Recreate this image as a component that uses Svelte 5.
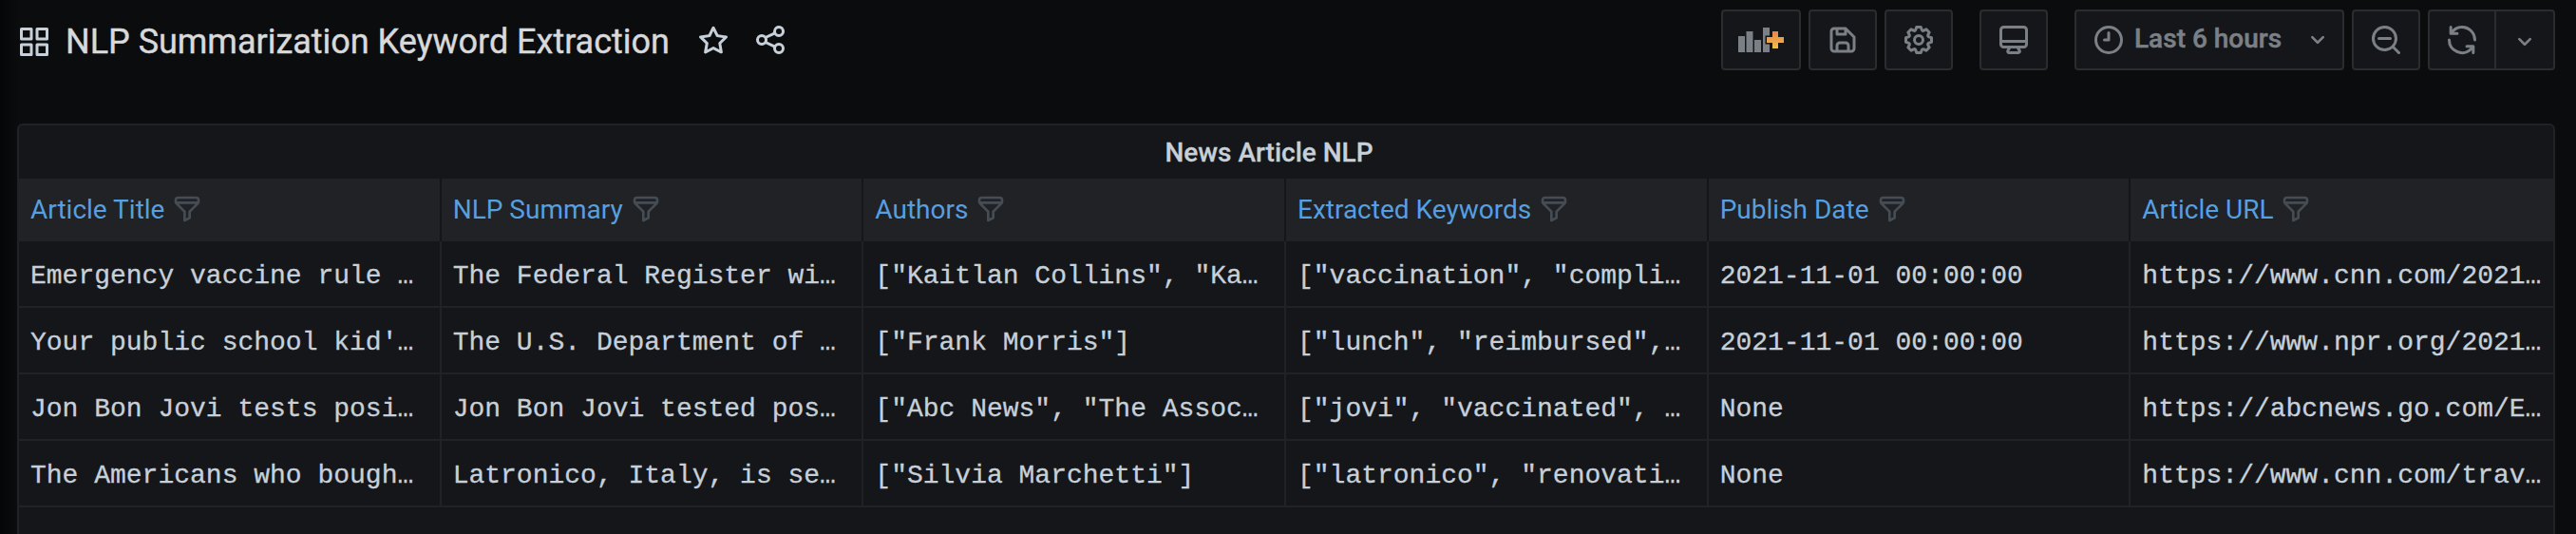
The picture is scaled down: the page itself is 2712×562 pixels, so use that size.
<script>
  const columns = ['Article Title', 'NLP Summary', 'Authors', 'Extracted Keywords', 'Publish Date', 'Article URL'];
  const rows = [
    ['Emergency vaccine rule …', 'The Federal Register wi…', '["Kaitlan Collins", "Ka…', '["vaccination", "compli…', '2021-11-01 00:00:00', 'https://www.cnn.com/2021…'],
    ["Your public school kid'…", 'The U.S. Department of …', '["Frank Morris"]', '["lunch", "reimbursed",…', '2021-11-01 00:00:00', 'https://www.npr.org/2021…'],
    ['Jon Bon Jovi tests posi…', 'Jon Bon Jovi tested pos…', '["Abc News", "The Assoc…', '["jovi", "vaccinated", …', 'None', 'https://abcnews.go.com/E…'],
    ['The Americans who bough…', 'Latronico, Italy, is se…', '["Silvia Marchetti"]', '["latronico", "renovati…', 'None', 'https://www.cnn.com/trav…']
  ];
</script>

<div class="page">
  <header>
    <svg class="ic apps" viewBox="0 0 24 24"><path d="M10,13H3a1,1,0,0,0-1,1v7a1,1,0,0,0,1,1h7a1,1,0,0,0,1-1V14A1,1,0,0,0,10,13ZM9,20H4V15H9ZM21,2H14a1,1,0,0,0-1,1v7a1,1,0,0,0,1,1h7a1,1,0,0,0,1-1V3A1,1,0,0,0,21,2ZM20,9H15V4h5Zm1,4H14a1,1,0,0,0-1,1v7a1,1,0,0,0,1,1h7a1,1,0,0,0,1-1V14A1,1,0,0,0,21,13Zm-1,7H15V15h5ZM10,2H3A1,1,0,0,0,2,3v7a1,1,0,0,0,1,1h7a1,1,0,0,0,1-1V3A1,1,0,0,0,10,2ZM9,9H4V4H9Z"/></svg>
    <h1>NLP Summarization Keyword Extraction</h1>
    <svg class="ic star" viewBox="0 0 24 24"><path d="M22,9.67A1,1,0,0,0,21.14,9l-5.69-.83L12.9,3a1,1,0,0,0-1.8,0L8.55,8.16,2.86,9a1,1,0,0,0-.81.68,1,1,0,0,0,.25,1l4.13,4-1,5.68A1,1,0,0,0,6.9,21.44L12,18.77l5.1,2.67a.93.93,0,0,0,.46.12,1,1,0,0,0,.59-.19,1,1,0,0,0,.4-1l-1-5.68,4.13-4A1,1,0,0,0,22,9.67Zm-6.15,4a1,1,0,0,0-.29.88l.72,4.2-3.76-2a1.06,1.06,0,0,0-.94,0l-3.76,2,.72-4.2a1,1,0,0,0-.29-.88l-3-3,4.21-.61a1,1,0,0,0,.76-.55L12,5.7l1.88,3.82a1,1,0,0,0,.76.55l4.21.61Z"/></svg>
    <svg class="ic share" viewBox="0 0 24 24"><path d="M18,14a4,4,0,0,0-3.08,1.48l-5.1-2.35a3.64,3.64,0,0,0,0-2.26l5.1-2.35A4,4,0,1,0,14,6a4.17,4.17,0,0,0,.07.71L8.79,9.14a4,4,0,1,0,0,5.72l5.28,2.43A4.17,4.17,0,0,0,14,18a4,4,0,1,0,4-4ZM18,4a2,2,0,1,1-2,2A2,2,0,0,1,18,4ZM6,14a2,2,0,1,1,2-2A2,2,0,0,1,6,14Zm12,6a2,2,0,1,1,2-2A2,2,0,0,1,18,20Z"/></svg>
    <div class="tools">
      <div class="btn add">
        <svg width="50" height="32" viewBox="0 0 50 32">
          <defs><linearGradient id="plus" x1="0" y1="0" x2="0" y2="1"><stop offset="0" stop-color="#e8834a"/><stop offset="1" stop-color="#ecc14b"/></linearGradient></defs>
          <path fill="#7b8087" d="M1 12h7v17H1zM9.500 7h7v22h-7zM18 16h7v13h-7zM27 3h7v8.500h-4.500v9h4.500v8.500h-7z"/>
          <path fill="url(#plus)" d="M37 7h6v6h6v6h-6v6h-6v-6h-6v-6h6z"/>
        </svg>
      </div>
      <div class="btn save"><svg class="ic" viewBox="0 0 24 24"><path d="M20.71,9.29l-6-6a1,1,0,0,0-.32-.21A1.09,1.09,0,0,0,14,3H6A3,3,0,0,0,3,6V18a3,3,0,0,0,3,3H18a3,3,0,0,0,3-3V10A1,1,0,0,0,20.71,9.29ZM9,5h4V7H9Zm6,14H9V16a1,1,0,0,1,1-1h4a1,1,0,0,1,1,1Zm4-1a1,1,0,0,1-1,1H17V16a3,3,0,0,0-3-3H10a3,3,0,0,0-3,3v3H6a1,1,0,0,1-1-1V6A1,1,0,0,1,6,5H7V8A1,1,0,0,0,8,9h6a1,1,0,0,0,1-1V6.41l4,4Z"/></svg></div>
      <div class="btn cog"><svg class="ic" viewBox="0 0 24 24"><path d="M21.32,9.55l-1.89-.63.89-1.78A1,1,0,0,0,20.13,6L18,3.87a1,1,0,0,0-1.15-.19l-1.78.89-.63-1.89A1,1,0,0,0,13.5,2h-3a1,1,0,0,0-.95.68L8.92,4.57,7.14,3.68A1,1,0,0,0,6,3.87L3.87,6a1,1,0,0,0-.19,1.15l.89,1.78-1.89.63A1,1,0,0,0,2,10.5v3a1,1,0,0,0,.68.95l1.89.63-.89,1.78A1,1,0,0,0,3.870,18L6,20.13a1,1,0,0,0,1.150.19l1.780-.89.63,1.890a1,1,0,0,0,.95.68h3a1,1,0,0,0,.95-.68l.63-1.890,1.780.89A1,1,0,0,0,18,20.13L20.130,18a1,1,0,0,0,.19-1.150l-.89-1.780,1.890-.63A1,1,0,0,0,22,13.500v-3A1,1,0,0,0,21.320,9.550ZM20,12.780l-1.200.4A2,2,0,0,0,17.640,16l.57,1.140-1.100,1.100L16,17.640a2,2,0,0,0-2.790,1.160l-.4,1.200H11.220l-.4-1.200A2,2,0,0,0,8,17.640l-1.140.57-1.100-1.100L6.360,16A2,2,0,0,0,5.200,13.180L4,12.780V11.220l1.200-.4A2,2,0,0,0,6.360,8L5.790,6.890l1.100-1.100L8,6.360A2,2,0,0,0,10.820,5.200l.4-1.200h1.560l.4,1.200A2,2,0,0,0,16,6.360l1.140-.57,1.100,1.100L17.640,8a2,2,0,0,0,1.160,2.790l1.200.4ZM12,8a4,4,0,1,0,4,4A4,4,0,0,0,12,8Zm0,6a2,2,0,1,1,2-2A2,2,0,0,1,12,14Z"/></svg></div>
      <div class="btn tv"><svg class="ic" viewBox="0 0 24 24"><path d="M19,2H5A3,3,0,0,0,2,5V15a3,3,0,0,0,3,3H7.640l-.58,1a2,2,0,0,0,0,2,2,2,0,0,0,1.750,1h6.460A2,2,0,0,0,17,21a2,2,0,0,0,0-2l-.59-1H19a3,3,0,0,0,3-3V5A3,3,0,0,0,19,2ZM8.770,20,10,18H14l1.200,2ZM20,15a1,1,0,0,1-1,1H5a1,1,0,0,1-1-1V14H20Zm0-3H4V5A1,1,0,0,1,5,4H19a1,1,0,0,1,1,1Z"/></svg></div>
      <div class="btn range">
        <svg class="ic" viewBox="0 0 24 24"><path d="M12,2A10,10,0,1,0,22,12,10,10,0,0,0,12,2Zm0,18a8,8,0,1,1,8-8A8,8,0,0,1,12,20ZM12,6a1,1,0,0,0-1,1v4H9a1,1,0,0,0,0,2h3a1,1,0,0,0,1-1V7A1,1,0,0,0,12,6Z"/></svg>
        <span>Last 6 hours</span>
        <svg class="ic chev" viewBox="0 0 24 24"><path d="M17,9.170a1,1,0,0,0-1.410,0L12,12.710,8.460,9.170a1,1,0,0,0-1.410,0,1,1,0,0,0,0,1.420l4.240,4.240a1,1,0,0,0,1.420,0L17,10.590A1,1,0,0,0,17,9.170Z"/></svg>
      </div>
      <div class="btn zoom"><svg class="ic" viewBox="0 0 24 24"><path d="M21.710,20.290,18,16.610A9,9,0,1,0,16.610,18l3.680,3.680a1,1,0,0,0,1.420,0A1,1,0,0,0,21.710,20.290ZM11,18a7,7,0,1,1,7-7A7,7,0,0,1,11,18Zm4-8H7a1,1,0,0,0,0,2h8a1,1,0,0,0,0-2Z"/></svg></div>
      <div class="btn sync"><svg class="ic" viewBox="0 0 24 24"><path d="M19.910,15.510H15.380a1,1,0,0,0,0,2h2.400A8,8,0,0,1,4,12a1,1,0,1,0-2,0,10,10,0,0,0,16.880,7.230V21a1,1,0,0,0,2,0V16.500A1,1,0,0,0,19.910,15.510ZM12,2A10,10,0,0,0,5.120,4.770V3a1,1,0,0,0-2,0V7.500a1,1,0,0,0,1,1h4.500a1,1,0,0,0,0-2H6.220A8,8,0,0,1,20,12a1,1,0,0,0,2,0A10,10,0,0,0,12,2Z"/></svg></div>
      <div class="btn more"><svg class="ic chev" viewBox="0 0 24 24"><path d="M17,9.170a1,1,0,0,0-1.410,0L12,12.710,8.460,9.170a1,1,0,0,0-1.410,0,1,1,0,0,0,0,1.420l4.240,4.240a1,1,0,0,0,1.420,0L17,10.590A1,1,0,0,0,17,9.170Z"/></svg></div>
    </div>
  </header>

  <section class="panel">
    <h2>News Article NLP</h2>
    <div class="grid head">
      {#each columns as c}
        <div class="th"><span>{c}</span><svg viewBox="0 0 24 24"><path d="M19,2H5A3,3,0,0,0,2,5V6.170a3,3,0,0,0,.25,1.200l0,.06a2.810,2.810,0,0,0,.59.860L9,14.410V21a1,1,0,0,0,.47.850A1,1,0,0,0,10,22a1,1,0,0,0,.45-.11l4-2A1,1,0,0,0,15,19V14.410l6.120-6.120a2.810,2.810,0,0,0,.59-.86l0-.06A3,3,0,0,0,22,6.170V5A3,3,0,0,0,19,2ZM13.290,13.290A1,1,0,0,0,13,14v4.380l-2,1V14a1,1,0,0,0-.29-.71L5.410,8H18.590ZM20,6H4V5A1,1,0,0,1,5,4H19a1,1,0,0,1,1,1Z"/></svg></div>
      {/each}
    </div>
    {#each rows as r}
      <div class="grid row">
        {#each r as v}<div class="td">{v}</div>{/each}
      </div>
    {/each}
  </section>
</div>

<style>
  :global(body) { background: #0b0c0e; }
  .page { box-sizing: border-box; width: 2712px; height: 562px; overflow: hidden; padding: 0 22px 0 18px; font-family: Roboto, "Liberation Sans", sans-serif; background: linear-gradient(90deg, #050607 0, #0b0c0e 20px); }
  .ic { width: 36px; height: 36px; fill: currentColor; flex: none; display: block; }
  header { display: flex; align-items: center; height: 84px; color: #c7d0d9; }
  .apps { margin-top: 4px; }
  h1 { margin: 3px 0 0 15px; font-size: 36px; line-height: 44px; font-weight: 400; letter-spacing: -0.02px; color: #d8d9da; white-space: nowrap; -webkit-text-stroke: 0.4px #d8d9da; }
  .star { margin-left: 28px; }
  .share { margin-left: 24px; }
  .tools { display: flex; margin-left: auto; color: #7b8087; }
  .btn { box-sizing: border-box; height: 64px; border: 2px solid #2b2c2f; border-radius: 4px; background: #141619; display: flex; align-items: center; justify-content: center; }
  .add { width: 84px; margin-right: 8px; }
  .save { width: 72px; margin-right: 8px; }
  .cog { width: 72px; margin-right: 28px; }
  .tv { width: 72px; margin-right: 28px; }
  .range { width: 284px; margin-right: 8px; justify-content: flex-start; padding-left: 16px; }
  .range span { font-size: 28px; font-weight: 500; margin: 0 0 3px 9px; white-space: nowrap; -webkit-text-stroke: 0.5px currentColor; }
  .range .chev { margin-left: 22px; }
  .zoom { width: 72px; margin-right: 8px; }
  .sync { width: 72px; border-radius: 4px 0 0 4px; }
  .more { width: 64px; margin-left: -2px; padding-top: 4px; border-radius: 0 4px 4px 0; }
  .chev { width: 32px; height: 32px; }
  .panel { margin-top: 46px; border: 2px solid #202226; border-radius: 6px; background: #141619; height: 460px; }
  h2 { box-sizing: border-box; margin: 0; height: 56px; line-height: 58px; padding-right: 36px; text-align: center; font-size: 28px; font-weight: 500; color: #c7d0d9; -webkit-text-stroke: 0.3px currentColor; }
  .grid { display: grid; grid-template-columns: repeat(6, minmax(0, 1fr)); }
  .head { height: 66px; background: #202226; }
  .th, .td { box-sizing: border-box; padding-left: 12px; border-right: 2px solid #202226; white-space: nowrap; overflow: hidden; }
  .th { display: flex; align-items: center; padding-bottom: 2px; border-right-color: #141619; color: #569fe0; font-size: 28px; }
  .th:last-child, .td:last-child { border-right: 0; }
  .th svg { width: 32px; height: 32px; margin-left: 8px; fill: #464c54; }
  .row { height: 68px; border-bottom: 2px solid #202226; }
  .td { height: 68px; font: 28px/74px "Liberation Mono", monospace; color: #c7d0d9; -webkit-text-stroke: 0.3px currentColor; }
</style>
